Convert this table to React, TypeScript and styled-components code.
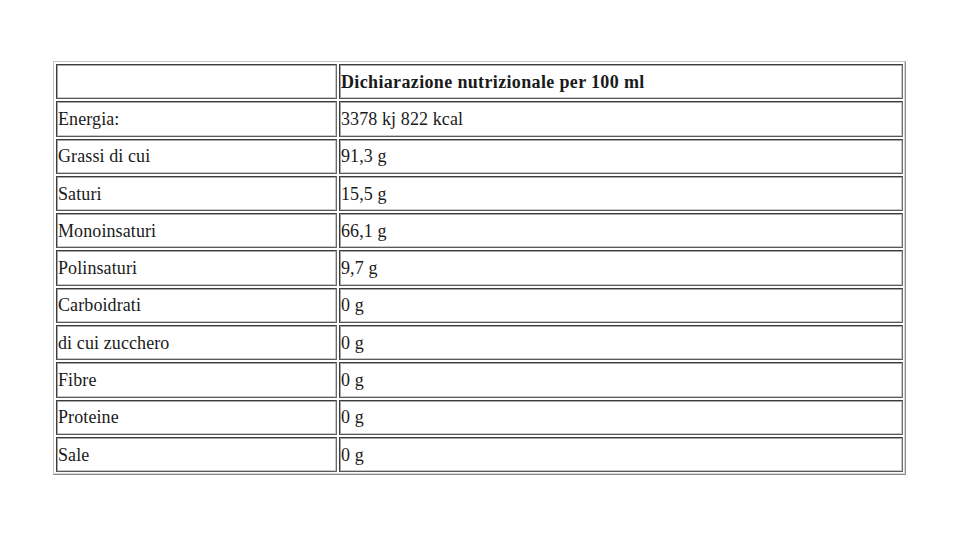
import React from "react";
import styled, { createGlobalStyle } from "styled-components";

const Global = createGlobalStyle`
  html, body { margin: 0; padding: 0; background: #ffffff; }
  body { font-family: "Liberation Serif", "Times New Roman", serif; color: #000; }
`;

const Page = styled.div`
  padding: 61px 0 0 53px;
`;

const Table = styled.table`
  width: 853px;
  border-collapse: separate;
  border-spacing: 2px;
  border: 1px solid;
  border-color: #c4c4c4 #8a8a8a #8a8a8a #c4c4c4;
  box-shadow: inset -1px -1px 0 #d6d6d6;
  table-layout: fixed;
`;

const Cell = styled.td<{ $bold?: boolean }>`
  box-sizing: border-box;
  height: 35.3px;
  padding: 1px 1px 0 1px;
  border: 1px solid;
  border-color: #3c3c3c #6a6a6a #5a5a5a #3c3c3c;
  box-shadow: inset 1px 1px 0 #a8a8a8, inset -1px -1px 0 #c8c8c8;
  font-size: 18px;
  font-weight: ${(p) => (p.$bold ? 700 : 400)};
  letter-spacing: ${(p) => (p.$bold ? "0.35px" : "0.1px")};
  vertical-align: middle;
  white-space: nowrap;
  color: #1a1a1a;
`;

const rows: [string, string][] = [
  ["Energia:", "3378 kj 822 kcal"],
  ["Grassi di cui", "91,3 g"],
  ["Saturi", "15,5 g"],
  ["Monoinsaturi", "66,1 g"],
  ["Polinsaturi", "9,7 g"],
  ["Carboidrati", "0 g"],
  ["di cui zucchero", "0 g"],
  ["Fibre", "0 g"],
  ["Proteine", "0 g"],
  ["Sale", "0 g"],
];

export default function App() {
  return (
    <>
      <Global />
      <Page>
        <Table>
          <colgroup>
            <col style={{ width: 281 }} />
            <col />
          </colgroup>
          <tbody>
            <tr>
              <Cell />
              <Cell $bold>Dichiarazione nutrizionale per 100 ml</Cell>
            </tr>
            {rows.map(([a, b]) => (
              <tr key={a}>
                <Cell>{a}</Cell>
                <Cell>{b}</Cell>
              </tr>
            ))}
          </tbody>
        </Table>
      </Page>
    </>
  );
}
